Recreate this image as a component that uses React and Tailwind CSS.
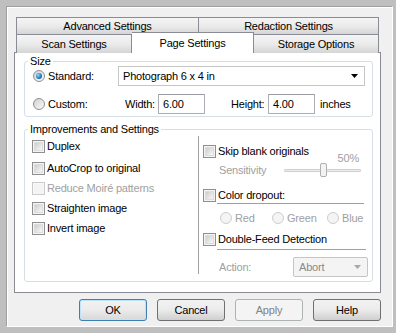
import React from 'react';

const Check = ({ disabled }) => (
  <span className={`flex h-[13px] w-[13px] shrink-0 items-center justify-center border ${disabled ? 'border-[#cbcbcb] bg-[#f7f7f7]' : 'border-[#8e8f8f] bg-[#f4f4f4]'}`}>
    <span className={`h-[9px] w-[9px] ${disabled ? 'bg-[#f4f4f4]' : 'border border-[#dcdcdc] bg-linear-to-br from-[#cdcdcd] to-[#f8f8f8]'}`} />
  </span>
);

const Radio = ({ checked, disabled }) => (
  <span className={`flex h-[12px] w-[12px] shrink-0 items-center justify-center rounded-full border ${disabled ? 'border-[#cdcdcd] bg-[#f4f4f4]' : 'border-[#8e8f8f] bg-linear-to-br from-[#d0d0d0] to-[#fbfbfb]'}`}>
    {checked && <span className="h-[6px] w-[6px] rounded-full bg-[radial-gradient(circle_at_35%_35%,#9ad6ff,#1c74bb_60%,#0c4886)]" />}
  </span>
);

const Arrow = ({ color = '#000' }) => (
  <svg width="7" height="4" viewBox="0 0 7 4"><path d="M0 0h7L3.5 4z" fill={color} /></svg>
);

const tab = 'flex items-center justify-center border-t border-r border-[#898c95] bg-linear-to-b from-[#f4f4f4] via-[#ebebeb] to-[#d5d5d5]';
const btn = 'flex h-[22px] w-[68px] items-center justify-center rounded-[3px] border';

const App = () => {
  return (
    <div className="h-[333px] w-[396px] bg-[#bfbfbf] pt-[6px] pr-[3px] pb-[6px] pl-[6px] font-['Liberation_Sans',Arial,sans-serif] text-[11px] tracking-[-0.2px] text-black">
      <div className="h-full border border-[#a0a0a0] border-r-white border-b-white">
        <div className="h-full border-t border-l border-white bg-[#f0f0f0] pt-[9px] pl-[6px]">
          {/* tabs */}
          <div className="ml-[2px] flex h-[17px]">
            <div className={`${tab} w-[183px] border-l`}>Advanced Settings</div>
            <div className={`${tab} w-[180px]`}>Redaction Settings</div>
          </div>
          <div className="-mt-[2px] ml-[2px] flex h-[21px] items-end">
            <div className={`${tab} h-[19px] w-[116px] border-l`}>Scan Settings</div>
            <div className="relative z-10 flex h-[21px] w-[122px] justify-center border-t border-r border-[#898c95] bg-white pt-[2px]">Page Settings</div>
            <div className={`${tab} h-[19px] w-[125px]`}>Storage Options</div>
          </div>

          <div className="-mt-px h-[241px] w-[367px] border border-[#898c95] bg-white pr-[7px] pl-[9px]">
            <fieldset className="mt-[2px] rounded-[3px] border border-[#d5dfe5] pb-[2px]">
              <legend className="ml-[3px] px-[2px] leading-[13px]">Size</legend>
              <div className="-mt-[2px] flex h-[20px] items-center">
                <div className="flex w-[93px] items-center gap-[3px] pl-[8px]"><Radio checked /><span>Standard:</span></div>
                <div className="flex h-[20px] w-[247px] items-center justify-between border border-[#c6c6c6] bg-white pr-[6px] pl-[4px]">
                  <span>Photograph 6 x 4 in</span><Arrow />
                </div>
              </div>
              <div className="mt-[8px] flex h-[20px] items-center">
                <div className="flex w-[93px] items-center gap-[3px] pl-[8px]"><Radio /><span>Custom:</span></div>
                <span className="ml-[7px] w-[33px]">Width:</span>
                <div className="flex h-[20px] w-[47px] items-center border border-[#abadb3] border-t-[#9a9ca3] bg-white pl-[4px]">6.00</div>
                <span className="ml-[26px] w-[37px]">Height:</span>
                <div className="flex h-[20px] w-[47px] items-center border border-[#abadb3] border-t-[#9a9ca3] bg-white pl-[4px]">4.00</div>
                <span className="ml-[5px]">inches</span>
              </div>
            </fieldset>

            <fieldset className="mt-[6px] rounded-[3px] border border-[#d5dfe5] pb-[7px]">
              <legend className="ml-[3px] px-[2px] leading-[13px]">Improvements and Settings</legend>
              <div className="flex h-[138px]">
                <div className="flex w-[173px] flex-col pl-[7px]">
                  <div className="flex h-[20px] items-center gap-[2px]"><Check /><span>Duplex</span></div>
                  <div className="mt-[2px] flex h-[20px] items-center gap-[2px]"><Check /><span>AutoCrop to original</span></div>
                  <div className="flex h-[20px] items-center gap-[2px] text-[#a0a0a0]"><Check disabled /><span>Reduce Moiré patterns</span></div>
                  <div className="flex h-[20px] items-center gap-[2px]"><Check /><span>Straighten image</span></div>
                  <div className="flex h-[20px] items-center gap-[2px]"><Check /><span>Invert image</span></div>
                </div>
                <div className="w-px bg-[#a0a0a0]" />
                <div className="flex flex-1 flex-col pl-[4px]">
                  <div className="mt-[8px] flex h-[14px] items-center gap-[2px]"><Check /><span>Skip blank originals</span></div>
                  <div className="-mt-[6px] h-[12px] pr-[13px] text-right leading-[12px] text-[#a0a0a0]">50%</div>
                  <div className="flex h-[12px] items-center text-[#a0a0a0]">
                    <span className="ml-[16px]">Sensitivity</span>
                    <div className="relative mr-[11px] ml-auto h-[3px] w-[77px] rounded-[1px] border border-[#cfcfcf] bg-[#ededed]">
                      <div className="absolute -top-[7px] left-[35px] h-[14px] w-[7px] rounded-[2px] border border-[#b0b0b0] bg-[#f3f3f3]" />
                    </div>
                  </div>
                  <div className="mt-[11px] flex items-start">
                    <span className="mt-[2px]"><Check /></span>
                    <div className="mr-[8px] ml-[1px] flex-1 border-b border-[#a0a0a0] pl-[1px] leading-[16px]">Color dropout:</div>
                  </div>
                  <div className="mt-[6px] flex h-[16px] items-center pl-[17px] text-[#a0a0a0]">
                    <div className="flex w-[52px] items-center gap-[3px]"><Radio disabled /><span>Red</span></div>
                    <div className="flex w-[55px] items-center gap-[3px]"><Radio disabled /><span>Green</span></div>
                    <div className="flex items-center gap-[3px]"><Radio disabled /><span>Blue</span></div>
                  </div>
                  <div className="mt-[5px] flex items-start">
                    <span className="mt-[2px]"><Check /></span>
                    <div className="mr-[6px] ml-[1px] flex-1 border-b border-[#a0a0a0] pb-[2px] pl-[1px] leading-[16px]">Double-Feed Detection</div>
                  </div>
                  <div className="mt-[7px] flex h-[20px] items-center text-[#a0a0a0]">
                    <span className="ml-[16px]">Action:</span>
                    <div className="mr-[4px] ml-auto flex h-[20px] w-[75px] items-center justify-between rounded-[2px] border border-[#c5c5c5] bg-[#f4f4f4] pr-[6px] pl-[5px] text-[#8a8a8a]">
                      <span>Abort</span><Arrow color="#a8a8a8" />
                    </div>
                  </div>
                </div>
              </div>
            </fieldset>
          </div>

          <div className="mt-[6px] flex w-[367px] justify-end gap-[10px]">
            <button className={`${btn} border-[#3c7fb1] bg-linear-to-b from-[#f2f2f2] via-[#ebebeb] to-[#d8d8d8] shadow-[inset_0_0_0_1px_#bfe3f7]`}>OK</button>
            <button className={`${btn} border-[#707070] bg-linear-to-b from-[#f2f2f2] via-[#ebebeb] to-[#cfcfcf]`}>Cancel</button>
            <button className={`${btn} border-[#adb2b5] bg-[#f4f4f4] text-[#838383]`}>Apply</button>
            <button className={`${btn} border-[#707070] bg-linear-to-b from-[#f2f2f2] via-[#ebebeb] to-[#cfcfcf]`}>Help</button>
          </div>
        </div>
      </div>
    </div>
  );
};

export default App;
